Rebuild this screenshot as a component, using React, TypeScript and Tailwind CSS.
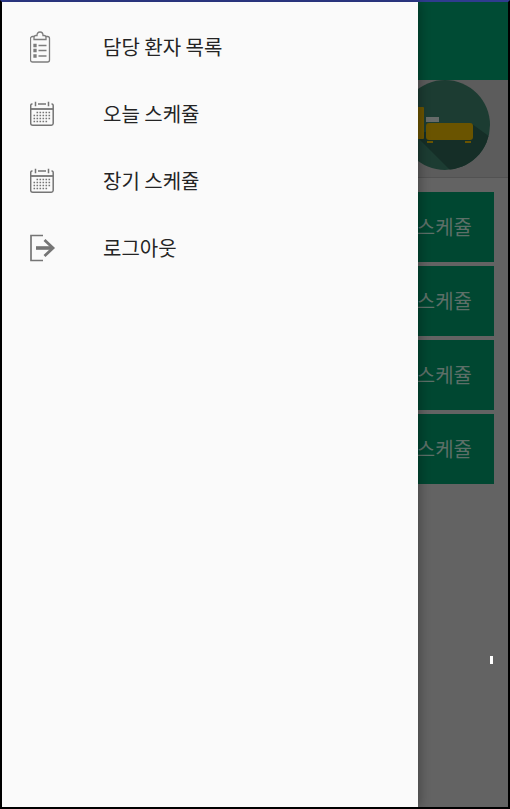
import React from "react";

function ClipboardIcon() {
  return (
    <svg className="h-8 w-6" viewBox="0 0 24 32" fill="none" stroke="#7d7d7d" strokeWidth="1.3" aria-hidden="true">
      <path d="M4 5.500H2.500a2 2 0 0 0-2 2v21.500a2 2 0 0 0 2 2h15a2 2 0 0 0 2-2v-21.500a2 2 0 0 0-2-2H16" />
      <path d="M4 8.500V6.500q0-2 2-2h1q0-3.500 3-3.500t3 3.500h1q2 0 2 2v2z" />
      <path d="M8.500 14.500h8M8.500 19.500h8M8.500 25h8" />
      <path d="M4 13.500h2v2h-2zM4 18.500h2v2h-2zM4 24h2v2h-2z" fill="#888" />
    </svg>
  );
}

function CalendarIcon() {
  return (
    <svg className="h-7 w-6" viewBox="0 0 24 28" fill="none" stroke="#757575" aria-hidden="true">
      <path d="M2.500 4H2a1.500 1.500 0 0 0-1.300 1.500V23.500A2 2 0 0 0 2.700 25.300H21.300A2 2 0 0 0 23.200 23.500V5.500A1.500 1.500 0 0 0 22 4H21.500" strokeWidth="1.500" />
      <path d="M8 4h8" strokeWidth="1.500" />
      <path d="M5.500 1.800v4.500M18.500 1.800v4.500" strokeWidth="1.500" />
      <path d="M1 9h22" strokeWidth="1.800" />
      <path d="M6.500 12.500h15M3.500 15.500h18M3.500 18.500h18M3.500 21.500h15" strokeWidth="1.400" strokeDasharray="1.600 1.400" />
    </svg>
  );
}

function LogoutIcon() {
  return (
    <svg className="h-7 w-6" viewBox="0 0 24 28" fill="none" stroke="#757575" aria-hidden="true" overflow="visible">
      <path d="M13 1.500H1v25h12" strokeWidth="1.700" />
      <path d="M6 14h17" strokeWidth="3.600" />
      <path d="M14.500 6l8.500 8l-8.500 8" strokeWidth="2.800" />
    </svg>
  );
}

function BedAvatar() {
  return (
    <svg className="h-[90px] w-[90px]" viewBox="0 0 90 90" role="img" aria-label="침대">
      <defs>
        <clipPath id="disc">
          <circle cx="45" cy="45" r="45" />
        </clipPath>
      </defs>
      <g clipPath="url(#disc)">
        <path d="M0 0h90v90H0z" fill="#1c3c32" />
        <path d="M14 54l36 36h40V57L72 44z" fill="#152e27" />
      </g>
      <rect x="8" y="27" width="16" height="32" rx="1" fill="#6a5400" />
      <rect x="26" y="37" width="13" height="5" fill="#666b69" />
      <rect x="26" y="43" width="47" height="17" rx="3" fill="#6a5400" />
      <path d="M27 61h6v2h-6zM65 61h6v2h-6z" fill="#6a5400" />
    </svg>
  );
}

const menu = [
  { label: "담당 환자 목록", Icon: ClipboardIcon },
  { label: "오늘 스케쥴", Icon: CalendarIcon },
  { label: "장기 스케쥴", Icon: CalendarIcon },
  { label: "로그아웃", Icon: LogoutIcon },
];

const schedules = ["스케쥴", "스케쥴", "스케쥴", "스케쥴"];

export default function App() {
  return (
    <div className="relative flex min-h-screen flex-col border-2 border-black border-t-[#2f3c8f] bg-[#636363] font-['Noto_Sans_CJK_KR','Noto_Sans',sans-serif] text-xl">
      <header className="h-[78px] bg-[#004b34]" />
      <section className="flex h-[98px] items-start justify-end border-b border-[#525252] bg-[#5c5c5c] pr-[18px]">
        <BedAvatar />
      </section>
      <main className="flex flex-col gap-1 px-3.5 pt-3.5">
        {schedules.map((label, i) => (
          <button
            key={i}
            type="button"
            className="flex h-[70px] items-center justify-end bg-[#004731] pr-[22px] text-[#5d6f68]"
          >
            {label}
          </button>
        ))}
      </main>

      <nav className="absolute inset-y-0 left-0 flex w-[416px] max-w-[calc(100%-90px)] flex-col bg-[#fafafa] pt-[11px] shadow-[2px_0_10px_rgba(0,0,0,0.3)]">
        {menu.map(({ label, Icon }) => (
          <button key={label} type="button" className="flex h-[67px] items-center gap-[49px] px-7 text-left text-[#242424]">
            <Icon />
            <span>{label}</span>
          </button>
        ))}
      </nav>
      <span className="absolute right-[15px] bottom-[143px] h-2 w-[3px] bg-white" />
    </div>
  );
}
